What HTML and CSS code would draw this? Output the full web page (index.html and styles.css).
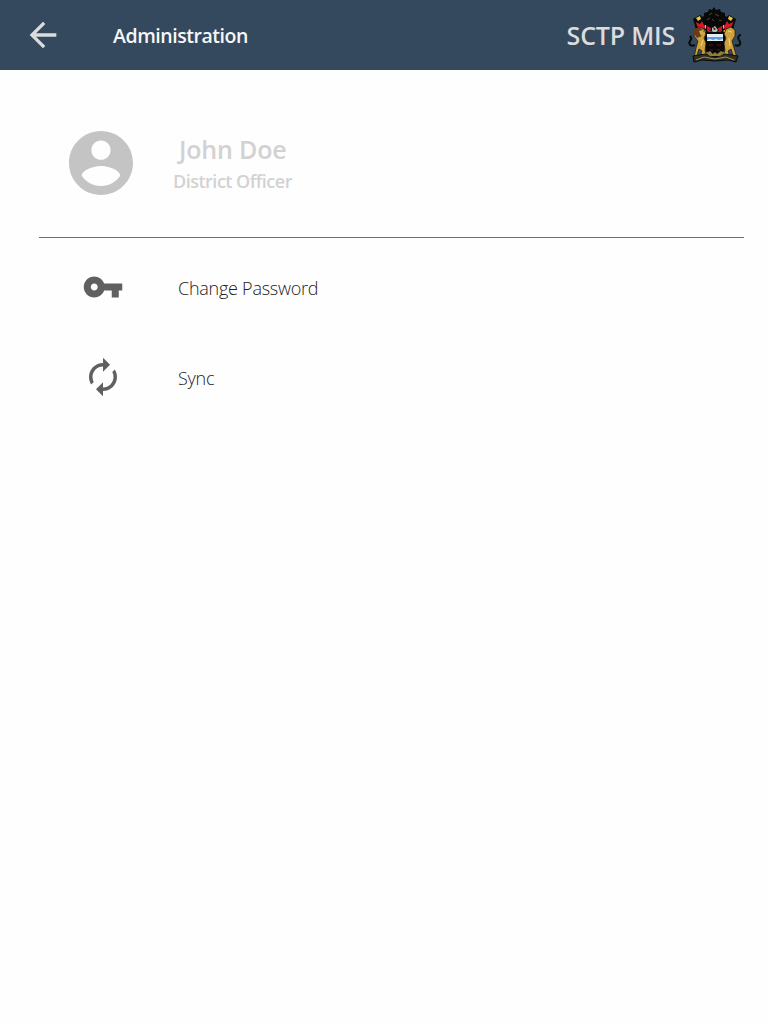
FILE: index.html
```html
<!DOCTYPE html>
<html lang="en">
<head>
<meta charset="utf-8">
<title>Administration</title>
<link rel="stylesheet" href="styles.css">
</head>
<body>
<header class="topbar">
  <svg class="back" viewBox="0 0 24 24"><path d="M20 11H7.83l5.59-5.59L12 4l-8 8 8 8 1.41-1.41L7.83 13H20v-2z"/></svg>
  <h1 class="title">Administration</h1>
  <span class="brand">SCTP MIS</span>
  <svg class="crest" viewBox="0 0 66 66">
    <!-- mane and eagle -->
    <path fill="#080909" d="M32 5l2 3 4-1 1 3 4 1v3l3 2-1 4 3 3-4 6H21l-4-6 3-3-1-4 3-2v-3l4-1 1-3 3 1z"/>
    <path fill="none" stroke="#56491d" d="M27 13l3-2M33 12l4 2M25 18l3-2M37 18l3 1M30 17l2 2"/>
    <!-- mantling -->
    <path fill="#080909" d="M11 17l7-4 7 5 3 8-5 8-9-4-1-6zM54 17l-7-4-7 5-3 8 5 8 9-4 1-6z"/>
    <path fill="#d31a2b" d="M14 20l4 2 2-3 2 4 3 1-3 3-4-1-3-2zM51 20l-4 2-2-3-2 4-3 1 3 3 4-1 3-2z"/>
    <path fill="#e5c544" d="M14 16l4-2 1 3-3 2zM51 16l-4-2-1 3 3 2zM23 23l1 0v4l-1-1zM42 23l-1 0v4l1-1zM21 27l3 2-2 2zM44 27l-3 2 2 2z"/>
    <path fill="#c31b25" d="M25 24l4 2-1 4-3-1zM40 24l-4 2 1 4 3-1z"/>
    <path fill="#b7b9b4" d="M30 26l3-2 3 4-3 3-3-2z"/>
    <path fill="#111" d="M31 25l3 2-2 1z"/>
    <!-- shield -->
    <path fill="#090708" d="M23 30h20v15c0 5-5 8-10 11-5-3-10-6-10-11z"/>
    <path fill="#5b9bdc" d="M25 33h16v6H25z"/>
    <path fill="#e4edf5" d="M25 32h16v3H25zM25 38l3-1 3 1 3-1 3 1 4-1v2H25z"/>
    <path stroke="#64121b" fill="none" d="M27 43h4M35 43h4M28 48h3M35 48h3"/>
    <!-- tails -->
    <path fill="none" stroke="#080a0c" stroke-width="2" d="M13 43c-4 2-7-1-5-4 2-2 1-4 0-5M53 43c4 2 7-1 4-5-2-3 0-5 2-5"/>
    <!-- lion and leopard -->
    <path fill="#cfa13d" stroke="#17130a" stroke-width=".7" d="M13 28l4-3 5 2 2 5-2 4 2 5-1 8 2 5-7 1 2-6-3-2-2 6 1 3h-4l2-10 2-7-4-5z"/>
    <path fill="#6b3d16" d="M12 27l5-2 5 4-2 5-5 2-3-4z"/>
    <path fill="#d6aa4d" d="M17 29l4-1 1 4-3 2z"/>
    <path fill="#cfa13d" stroke="#17130a" stroke-width=".7" d="M53 28l-4-3-5 2-2 5 2 4-2 5 1 8-2 5 7 1-2-6 3-2 2 6-1 3h5l-3-10-2-7 3-5z"/>
    <path fill="none" stroke="#f0d680" d="M21 38l-2 6M47 36l1 8M46 29l4 1"/>
    <!-- base -->
    <path fill="#312e1e" stroke="#090a08" d="M11 54l12-2 10 3 10-3 13 2-2 6-8-2-13 1-13-1-8 2z"/>
    <path fill="none" stroke="#96905f" d="M14 58l8-3 11 2 11-2 8 3"/>
    <path fill="#88803c" d="M24 51l4-2 3 3 2-2 2 2 4-3 4 2-5 3H28z"/>
  </svg>
</header>
<main>
  <section class="profile">
    <svg class="avatar" viewBox="2 2 20 20"><path d="M12 2C6.48 2 2 6.48 2 12s4.48 10 10 10 10-4.48 10-10S17.52 2 12 2zm0 3c1.66 0 3 1.34 3 3s-1.34 3-3 3-3-1.34-3-3 1.34-3 3-3zm0 14.2c-2.5 0-4.71-1.28-6-3.22.03-1.99 4-3.08 6-3.08 1.99 0 5.97 1.09 6 3.08-1.29 1.94-3.5 3.22-6 3.22z"/></svg>
    <div class="who">
      <div class="name">John Doe</div>
      <div class="role">District Officer</div>
    </div>
  </section>
  <nav class="menu">
    <a class="item">
      <svg viewBox="0 0 24 24"><path d="M12.65 10C11.83 7.67 9.61 6 7 6c-3.31 0-6 2.69-6 6s2.69 6 6 6c2.61 0 4.83-1.67 5.65-4H17v4h4v-4h2v-4H12.65zM7 14c-1.1 0-2-.9-2-2s.9-2 2-2 2 .9 2 2-.9 2-2 2z"/></svg>
      <span>Change Password</span>
    </a>
    <a class="item">
      <svg viewBox="0 0 24 24"><path d="M12 6v3l4-4-4-4v3c-4.42 0-8 3.58-8 8 0 1.57.46 3.03 1.24 4.26L6.7 14.8c-.45-.83-.7-1.79-.7-2.8 0-3.31 2.69-6 6-6zm6.76 1.74L17.3 9.2c.44.84.7 1.79.7 2.8 0 3.31-2.69 6-6 6v-3l-4 4 4 4v-3c4.42 0 8-3.58 8-8 0-1.57-.46-3.03-1.24-4.26z"/></svg>
      <span>Sync</span>
    </a>
  </nav>
</main>
</body>
</html>
```
FILE: styles.css
```css
* { box-sizing: border-box; }
body {
  margin: 0;
  min-height: 1024px;
  background: #fefefe;
  font-family: "Open Sans", "Noto Sans", sans-serif;
}
svg { display: block; flex: none; }
.topbar {
  display: flex;
  align-items: center;
  height: 70px;
  padding: 0 20px 0 23px;
  background: #34495e;
}
.back { width: 40px; height: 40px; fill: #dcdcdc; }
.title {
  margin: 2px 0 0 50px;
  font-size: 19.5px;
  font-weight: 600;
  line-height: 28px;
  letter-spacing: -0.45px;
  color: #f6f7f8;
}
.brand {
  margin: 0 14px 0 auto;
  font-size: 25px;
  font-weight: 600;
  line-height: 34px;
  letter-spacing: -0.2px;
  color: #dcdcdc;
  white-space: nowrap;
}
.crest { width: 66px; height: 66px; margin-left: -7px; }
.profile {
  display: flex;
  height: 168px;
  margin: 0 24px 0 39px;
  padding: 61px 0 0 30px;
  border-bottom: 1px solid #707070;
}
.avatar { width: 64px; height: 64px; fill: #c4c4c4; }
.who { margin: -1px 0 0 40px; color: #d2d2d2; font-weight: 600; white-space: nowrap; }
.name { margin-left: 6px; font-size: 25px; line-height: 38px; letter-spacing: -0.2px; }
.role { font-size: 18px; line-height: 26px; letter-spacing: -0.5px; }
.menu { padding: 4px 0 0 82px; }
.item {
  display: flex;
  align-items: center;
  height: 90px;
  font-size: 18px;
  font-weight: 300;
  color: #222;
}
.item svg { width: 42px; height: 42px; fill: #606060; }
.item span { margin: 2px 0 0 54px; letter-spacing: -0.25px; white-space: nowrap; }
```
